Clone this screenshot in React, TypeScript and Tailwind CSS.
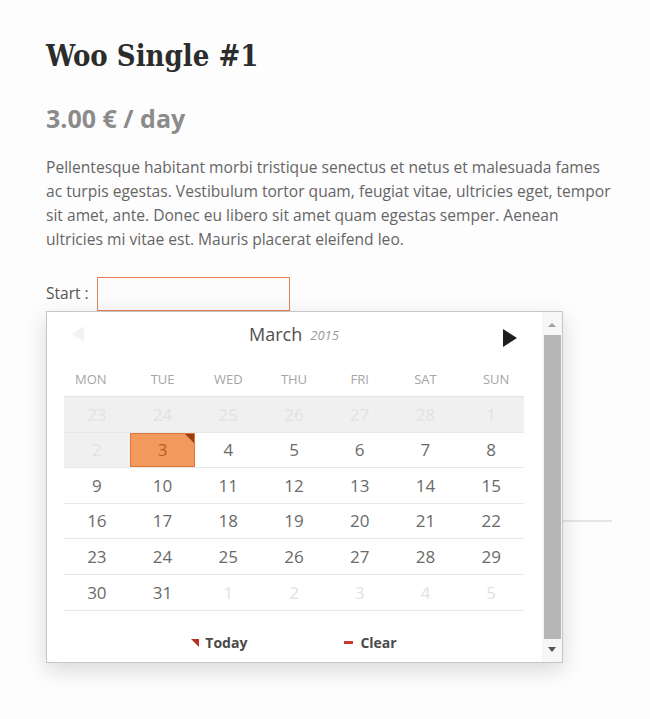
import { useMemo } from 'react'

type Cell = { day: number; faded?: boolean; shaded?: boolean; selected?: boolean }

const WEEKDAYS = ['MON', 'TUE', 'WED', 'THU', 'FRI', 'SAT', 'SUN']

function buildWeeks(): Cell[][] {
  const cells: Cell[] = []
  for (let d = 23; d <= 28; d++) cells.push({ day: d, faded: true, shaded: true })
  cells.push({ day: 1, faded: true, shaded: true })
  cells.push({ day: 2, faded: true, shaded: true })
  for (let d = 3; d <= 31; d++) cells.push({ day: d, selected: d === 3 })
  for (let d = 1; d <= 5; d++) cells.push({ day: d, faded: true })
  const weeks: Cell[][] = []
  for (let i = 0; i < cells.length; i += 7) weeks.push(cells.slice(i, i + 7))
  return weeks
}

function DayCell({ cell }: { cell: Cell }) {
  if (cell.selected) {
    return (
      <div className="relative flex h-full items-center justify-center border border-[#d9773d] bg-[#f29a5e] text-[#b85d24]">
        {cell.day}
        <span className="absolute right-0 top-0 h-0 w-0 border-l-[9px] border-t-[9px] border-l-transparent border-t-[#9c3a14]" />
      </div>
    )
  }
  return (
    <div
      className={`flex h-full items-center justify-center ${cell.shaded ? 'bg-[#f0f0f0]' : ''} ${
        cell.faded ? 'text-[#e2e2e2]' : 'text-[#6a6a6a]'
      }`}
    >
      {cell.day}
    </div>
  )
}

function Scrollbar() {
  return (
    <div className="flex w-[20px] flex-col items-center bg-[#f6f6f6] py-[2px]">
      <div className="flex h-[21px] w-full items-center justify-center">
        <span className="h-0 w-0 border-x-[4px] border-b-[4px] border-x-transparent border-b-[#a0a0a0]" />
      </div>
      <div className="w-[17px] flex-1 bg-[#b6b6b6]" />
      <div className="flex h-[21px] w-full items-center justify-center">
        <span className="h-0 w-0 border-x-[4px] border-t-[5px] border-x-transparent border-t-[#555]" />
      </div>
    </div>
  )
}

function Calendar() {
  const weeks = useMemo(buildWeeks, [])
  return (
    <div className="absolute left-0 top-[34px] z-10 flex h-[352px] w-[517px] border border-[#c6c6c6] bg-white shadow-[0_7px_20px_rgba(0,0,0,0.15)]">
      <div className="flex-1 pl-[17px] pr-[18px]">
        <div className="relative flex h-[50px] items-center justify-center pb-[5px]">
          <span className="absolute left-[8px] top-[14px] h-0 w-0 border-y-[8px] border-r-[12px] border-y-transparent border-r-[#f3f3f3]" />
          <span className="text-[18px] text-[#505050]">March</span>
          <span className="ml-[8px] mt-[3px] text-[13px] italic text-[#9a9a9a]">2015</span>
          <span className="absolute right-[7px] top-[17px] h-0 w-0 border-y-[9px] border-l-[14px] border-y-transparent border-l-[#1e1e1e]" />
        </div>
        <div className="grid h-[35px] grid-cols-7 items-center border-b border-[#e3e3e3] pt-[2px] text-[13px] text-[#a5a5a5]">
          {WEEKDAYS.map((d, i) => (
            <div
              key={d}
              className={`text-center ${i === 0 ? 'pr-[12px]' : ''} ${i === 6 ? 'pl-[10px]' : ''}`}
            >
              {d}
            </div>
          ))}
        </div>
        {weeks.map((week, i) => (
          <div key={i} className="grid h-[35.6px] grid-cols-7 border-b border-[#e8e8e8] text-[17px]">
            {week.map((c, j) => (
              <DayCell key={j} cell={c} />
            ))}
          </div>
        ))}
        <div className="flex h-[50px] items-center justify-center gap-[97px] pt-[14px] text-[14px] font-bold text-[#4a4a4a]">
          <span className="flex items-center gap-[6px]">
            <span className="h-0 w-0 border-l-[8px] border-t-[8px] border-l-transparent border-t-[#b83224]" />
            Today
          </span>
          <span className="flex items-center gap-[7px]">
            <span className="h-[3px] w-[9px] bg-[#c9382a]" />
            Clear
          </span>
        </div>
      </div>
      <Scrollbar />
    </div>
  )
}

export default function App() {
  return (
    <div className="min-h-screen bg-[#fdfdfd] px-[46px] pt-[38px] font-['Open_Sans',sans-serif]">
      <h1 className="font-['DejaVu_Serif_Condensed','DejaVu_Serif',serif] text-[29px] font-bold leading-[36px] text-[#2c2c2c]">
        Woo Single #1
      </h1>
      <p className="mt-[29px] text-[25px] font-bold leading-[30px] text-[#8b8b8b]">3.00 € / day</p>
      <p className="mt-[22px] w-[568px] text-[15.6px] leading-[24px] text-[#656565]">
        Pellentesque habitant morbi tristique senectus et netus et malesuada fames ac turpis egestas.
        Vestibulum tortor quam, feugiat vitae, ultricies eget, tempor sit amet, ante. Donec eu libero sit
        amet quam egestas semper. Aenean ultricies mi vitae est. Mauris placerat eleifend leo.
      </p>
      <div className="relative mt-[26px]">
        <div className="flex items-center gap-[8px]">
          <label className="text-[15.5px] text-[#555]">Start :</label>
          <input className="h-[34px] w-[193px] border border-[#e2845a] bg-[#fbfbfb] outline-none" />
        </div>
        <Calendar />
      </div>
      <div className="mt-[209px] h-[2px] w-[566px] bg-[#e6e6e6]" />
    </div>
  )
}
